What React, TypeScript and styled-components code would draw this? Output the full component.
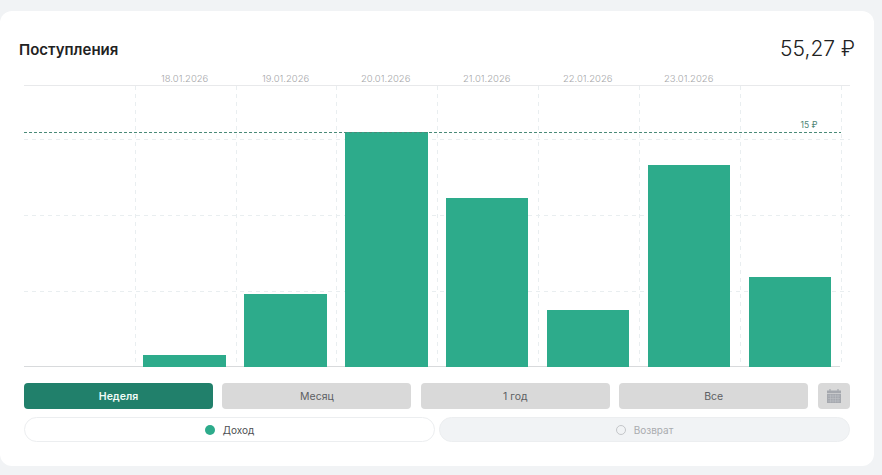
import React from "react";
import styled, { createGlobalStyle } from "styled-components";

const Global = createGlobalStyle`
  html, body { margin: 0; padding: 0; background: #f1f3f5; }
  body { font-family: Inter, "Liberation Sans", sans-serif; overflow: hidden; }
`;

const Page = styled.div`
  width: 882px;
  height: 475px;
  padding-top: 11px;
  box-sizing: border-box;
`;

const Card = styled.section`
  width: 874px;
  height: 455px;
  box-sizing: border-box;
  background: #fff;
  border-radius: 12px;
  padding: 23px 24px 0 24px;
  display: flex;
  flex-direction: column;
`;

const Header = styled.header`
  display: flex;
  justify-content: space-between;
  align-items: center;
  height: 28px;
  margin: 0 -5px 0 -5px;
`;

const Title = styled.h2`
  margin: 0;
  padding-top: 2px;
  font-size: 15px;
  font-weight: 600;
  color: #222;
`;

const Amount = styled.div`
  font-size: 21px;
  font-weight: 300;
  color: #222;
`;

const Chart = styled.svg`
  display: block;
  width: 826px;
  height: 305px;
`;

const Periods = styled.div`
  display: flex;
  gap: 9.4px;
  margin-top: 16px;
`;

const PeriodButton = styled.button<{ $active?: boolean }>`
  flex: 1;
  height: 26px;
  padding: 0;
  border: 0;
  border-radius: 4px;
  font-family: inherit;
  font-size: 10.5px;
  font-weight: ${(p) => (p.$active ? 600 : 400)};
  color: ${(p) => (p.$active ? "#f1fbf7" : "#5d5f63")};
  background: ${(p) => (p.$active ? "#21806b" : "#d9d9d9")};
`;

const CalendarButton = styled.button`
  flex: 0 0 32.4px;
  height: 26px;
  padding: 0;
  border: 0;
  border-radius: 4px;
  background: #d9d9d9;
  display: flex;
  align-items: center;
  justify-content: center;
`;

const Legend = styled.div`
  display: flex;
  gap: 4px;
  margin-top: 8px;
`;

const LegendItem = styled.div<{ $off?: boolean }>`
  flex: 1;
  height: 25px;
  box-sizing: border-box;
  border: 1px solid #eceef0;
  border-radius: 13px;
  background: ${(p) => (p.$off ? "#f1f3f5" : "#fff")};
  display: flex;
  align-items: center;
  justify-content: center;
  gap: 8px;
  font-size: 10px;
  color: ${(p) => (p.$off ? "#a9abaf" : "#4d4f53")};
`;

const Dot = styled.span<{ $off?: boolean }>`
  width: 10px;
  height: 10px;
  box-sizing: border-box;
  border-radius: 50%;
  background: ${(p) => (p.$off ? "transparent" : "#2dab8b")};
  border: ${(p) => (p.$off ? "1px solid #c4c6c9" : "none")};
`;

const ORIGIN_X = 24;
const ORIGIN_Y = 62;
const verticals = [135, 236, 336, 437, 538, 639, 740, 841];
const horizontals = [139, 215, 291];
const dates = [
  ["18.01.2026", 184.7],
  ["19.01.2026", 285.7],
  ["20.01.2026", 385.7],
  ["21.01.2026", 486.7],
  ["22.01.2026", 587.7],
  ["23.01.2026", 688.7],
] as const;
const bars = [
  [143, 226, 355],
  [244, 327, 294],
  [345, 428, 132],
  [446, 528, 198],
  [547, 629, 310],
  [648, 730, 165],
  [749, 831, 277],
];

const Calendar = () => (
  <svg width="14" height="14" viewBox="0 0 14 14" fill="none">
    <path d="M0 1.5h14V14H0z" fill="#a5a8ae" />
    <path d="M3 0v3M11 0v3" stroke="#a5a8ae" strokeWidth="1.2" />
    <path d="M0 4.5h14" stroke="#d9d9d9" strokeWidth="0.7" />
    <path d="M1 7h12M1 9.5h12M1 12h12M3.5 5.5v8M6 5.5v8M8.5 5.5v8M11 5.5v8" stroke="#c2c4c8" strokeWidth="0.5" />
  </svg>
);

export default function App() {
  return (
    <Page>
      <Global />
      <Card>
        <Header>
          <Title>Поступления</Title>
          <Amount>55,27 ₽</Amount>
        </Header>
        <Chart viewBox={`${ORIGIN_X} ${ORIGIN_Y} 826 305`}>
          {dates.map(([d, x]) => (
            <text key={d} x={x} y={82} textAnchor="middle" fontSize="9.5" fontWeight="300" fill="#a6a7aa" fontFamily="Inter, sans-serif">
              {d}
            </text>
          ))}
          <line x1="24" x2="850" y1="85.5" y2="85.5" stroke="#e8e9eb" />
          {horizontals.map((y) => (
            <line key={y} x1="24" x2="850" y1={y + 0.5} y2={y + 0.5} stroke="#e9eef0" strokeDasharray="4 4" />
          ))}
          {verticals.map((x) => (
            <line key={x} x1={x + 0.5} x2={x + 0.5} y1="86" y2="366" stroke="#e9eef0" strokeDasharray="4 4" />
          ))}
          <line x1="24" x2="840" y1="366.5" y2="366.5" stroke="#d8dadc" />
          {bars.map(([a, b, top]) => (
            <rect key={a} x={a} y={top} width={b - a} height={367 - top} fill="#2dab8b" />
          ))}
          <line x1="24" x2="841" y1="132.5" y2="132.5" stroke="#4a8a78" strokeDasharray="3 2" />
          <text x="809" y="128" textAnchor="middle" fontSize="8.5" fill="#4f8573" fontFamily="Inter, sans-serif">
            15 ₽
          </text>
        </Chart>
        <Periods>
          <PeriodButton $active>Неделя</PeriodButton>
          <PeriodButton>Месяц</PeriodButton>
          <PeriodButton>1 год</PeriodButton>
          <PeriodButton>Все</PeriodButton>
          <CalendarButton aria-label="Календарь">
            <Calendar />
          </CalendarButton>
        </Periods>
        <Legend>
          <LegendItem>
            <Dot />
            Доход
          </LegendItem>
          <LegendItem $off>
            <Dot $off />
            Возврат
          </LegendItem>
        </Legend>
      </Card>
    </Page>
  );
}
